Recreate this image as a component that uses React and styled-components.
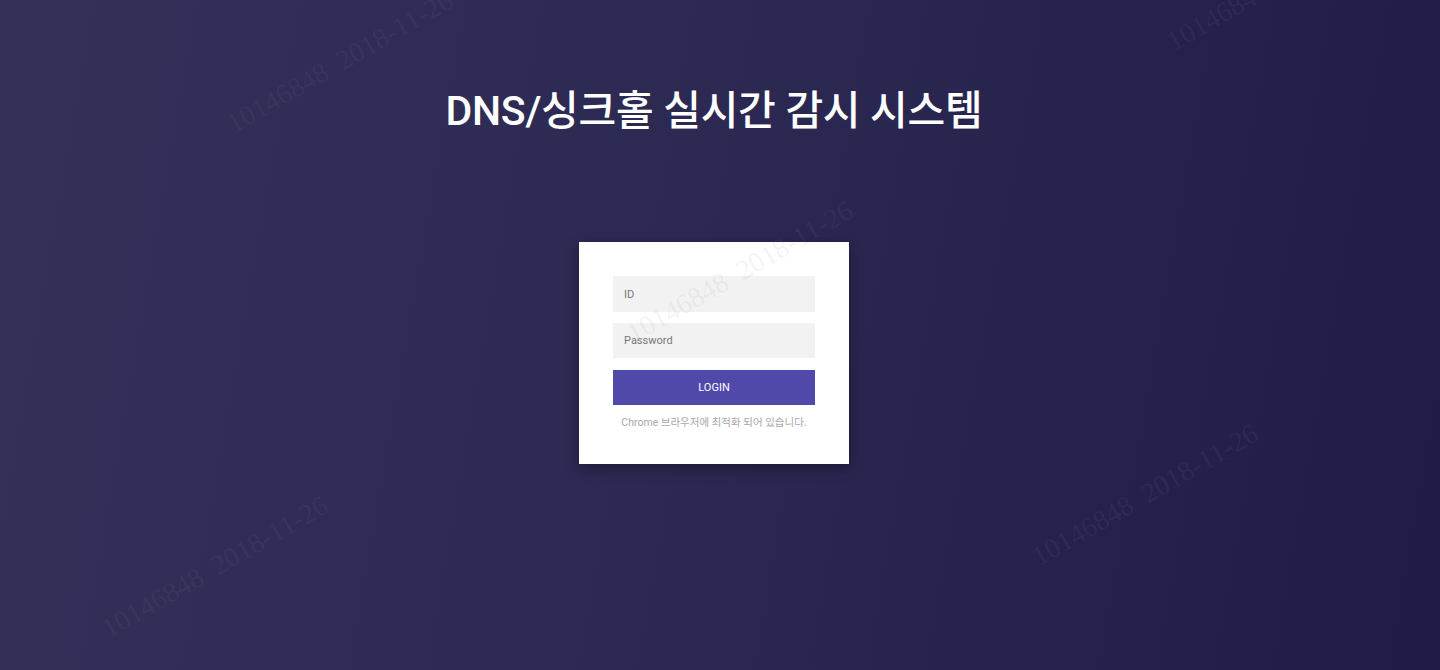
import React from "react";
import styled, { createGlobalStyle } from "styled-components";

const GlobalStyle = createGlobalStyle`
  html, body {
    margin: 0;
    padding: 0;
  }
  body {
    font-family: Roboto, "Noto Sans CJK KR", sans-serif;
  }
`;

const Page = styled.div`
  position: relative;
  overflow: hidden;
  min-height: 670px;
  padding-right: 12px;
  box-sizing: border-box;
  background: linear-gradient(100deg, #343159 0%, #2c2953 45%, #201c47 100%);
  display: flex;
  flex-direction: column;
  align-items: center;
`;

const Title = styled.h1`
  margin: 84px 0 0;
  font-family: Roboto, "Noto Sans CJK KR", sans-serif;
  font-size: 41px;
  font-weight: 500;
  line-height: 54px;
  letter-spacing: -0.3px;
  color: #ffffff;
`;

const Card = styled.div`
  margin-top: 104px;
  width: 270px;
  box-sizing: border-box;
  padding: 34px 34px 34px;
  background: #ffffff;
  box-shadow: 0 4px 12px rgba(0, 0, 0, 0.35);
  display: flex;
  flex-direction: column;
`;

const Field = styled.input`
  height: ${(p) => p.$h}px;
  margin-bottom: ${(p) => p.$mb}px;
  border: 0;
  outline: none;
  background: #f2f2f2;
  padding: 0 11px;
  font-family: Roboto, sans-serif;
  font-size: 11px;
  color: #444;
  box-sizing: border-box;
  &::placeholder {
    color: #777;
  }
`;

const LoginButton = styled.button`
  height: 35px;
  border: 0;
  background: #5049a9;
  color: #ffffff;
  font-family: Roboto, sans-serif;
  font-size: 11px;
  text-transform: uppercase;
  cursor: pointer;
`;

const Notice = styled.p`
  margin: 11px 0 0;
  text-align: center;
  font-family: Roboto, "Noto Sans CJK KR", sans-serif;
  font-size: 10.5px;
  line-height: 14px;
  color: #a8a8a8;
`;

const Mark = styled.span`
  position: absolute;
  left: ${(p) => p.$x}px;
  top: ${(p) => p.$y}px;
  transform: translate(-50%, -50%) rotate(-30deg);
  font-family: "Liberation Serif", serif;
  font-size: 28px;
  white-space: pre;
  color: rgba(140, 140, 160, 0.11);
  pointer-events: none;
  z-index: 5;
`;

const marks = [
  [340, 62],
  [740, 272],
  [215, 567],
  [1145, 495],
  [1280, -20],
];

export default function App() {
  return (
    <Page>
      <GlobalStyle />
      <Title>DNS/싱크홀 실시간 감시 시스템</Title>
      <Card>
        <Field placeholder="ID" $h={36} $mb={11} />
        <Field type="password" placeholder="Password" $h={35} $mb={12} />
        <LoginButton>Login</LoginButton>
        <Notice>Chrome 브라우저에 최적화 되어 있습니다.</Notice>
      </Card>
      {marks.map(([x, y], i) => (
        <Mark key={i} $x={x} $y={y}>
          10146848  2018-11-26
        </Mark>
      ))}
    </Page>
  );
}
